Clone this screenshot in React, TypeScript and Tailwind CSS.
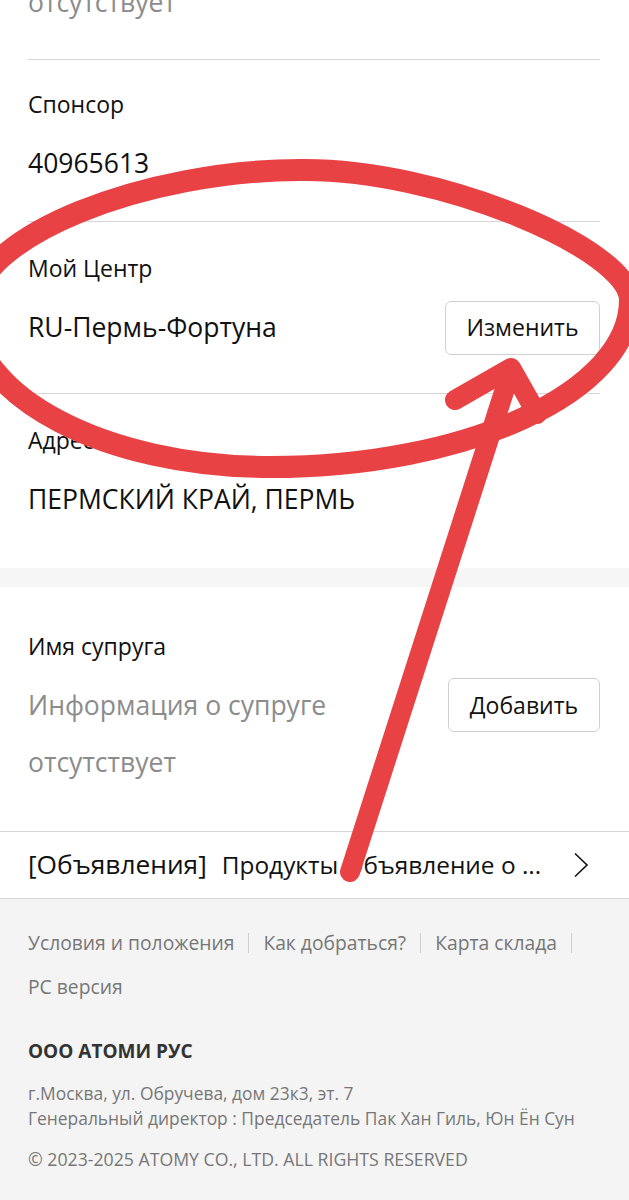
import React from "react";

const LINE = "border-[#d6d6d6]";

function OutlineButton({ label, className = "" }: { label: string; className?: string }) {
  return (
    <button
      className={`flex h-[54px] shrink-0 items-center justify-center rounded-[6px] border-[1.5px] border-[#d0d0d0] bg-white text-[23px] text-[#111] ${className}`}
    >
      {label}
    </button>
  );
}

function Annotation() {
  // red marker drawn over the screenshot
  return (
    <svg
      className="pointer-events-none absolute left-0 top-0"
      width="629"
      height="1200"
      viewBox="0 0 629 1200"
      fill="none"
    >
      <path
        d="M630 300 C630 250 440 168 300 170 C150 170 -28 234 -28 312 C-28 397 106 467 270 467 C467 467 630 392 630 300 Z"
        stroke="#e84244"
        strokeWidth="22"
      />
      <path d="M350 872 L511 370" stroke="#e84244" strokeWidth="20" strokeLinecap="round" />
      <path
        d="M455 400 L511 368 L537 414"
        stroke="#e84244"
        strokeWidth="20"
        strokeLinecap="round"
        strokeLinejoin="round"
      />
    </svg>
  );
}

const footerLinks = ["Условия и положения", "Как добраться?", "Карта склада", "PC версия"];

export default function App() {
  return (
    <div className="relative h-[1200px] w-[629px] overflow-hidden bg-white font-['Open_Sans',sans-serif] text-[#111]">
      {/* PROFILE FIELDS */}
      <div className="pl-[28px] pr-[29px]">
        <div className={`-mt-[26px] border-b ${LINE} pb-[28px] text-[26.5px] leading-[57px] text-[#8c8c8c]`}>
          отсутствует
        </div>

        <div className={`border-b ${LINE} pb-[29px] pt-[28px]`}>
          <div className="text-[23px] leading-[32px]">Спонсор</div>
          <div className="mt-[15px] text-[26.5px] leading-[57px]">40965613</div>
        </div>

        <div className={`border-b ${LINE} pb-[37px] pt-[30px]`}>
          <div className="text-[23px] leading-[32px]">Мой Центр</div>
          <div className="mt-[15px] flex h-[57px] items-center justify-between">
            <span className="text-[26.5px] leading-[57px]">RU-Пермь-Фортуна</span>
            <OutlineButton label="Изменить" className="w-[155px]" />
          </div>
        </div>

        <div className="pb-[40px] pt-[30px]">
          <div className="text-[23px] leading-[32px]">Адрес</div>
          <div className="mt-[15px] text-[26.5px] leading-[57px]">ПЕРМСКИЙ КРАЙ, ПЕРМЬ</div>
        </div>
      </div>

      <div className="h-[19px] bg-[#f6f6f6]" />

      {/* SPOUSE */}
      <div className={`border-b ${LINE} pb-[40px] pl-[28px] pr-[29px] pt-[43px]`}>
        <div className="text-[23px] leading-[32px]">Имя супруга</div>
        <div className="mt-[15px] flex items-start justify-between">
          <div className="w-[335px] text-[26.5px] leading-[57px] text-[#8c8c8c]">
            Информация о супруге отсутствует
          </div>
          <OutlineButton label="Добавить" className="mt-[1px] w-[152px]" />
        </div>
      </div>

      {/* NOTICE ROW */}
      <div className={`flex h-[67px] items-center border-b ${LINE} pl-[28px] pr-[40px]`}>
        <span className="text-[26.3px]">[Объявления]</span>
        <span className="ml-[15px] flex-1 truncate text-[24.4px]">Продукты Объявление о ...</span>
        <svg width="16" height="26" viewBox="0 0 16 26" className="ml-[10px]">
          <polyline points="2,1.5 14,13 2,24.5" fill="none" stroke="#111" strokeWidth="1.6" />
        </svg>
      </div>

      {/* FOOTER */}
      <footer className="bg-[#f4f4f4] pb-[60px] pl-[28px] pr-[29px] pt-[22px] text-[#777]">
        <div className="flex flex-wrap items-center text-[19.3px] leading-[44px]">
          {footerLinks.map((l, i) => (
            <span key={l} className="flex items-center">
              {l}
              {i < footerLinks.length - 1 && <span className="mx-[14px] h-[20px] w-px bg-[#cfcfcf]" />}
            </span>
          ))}
        </div>
        <div className="mt-[28px] text-[19px] font-bold leading-[28px] text-[#333]">ООО АТОМИ РУС</div>
        <div className="mt-[16px] text-[17.4px] leading-[25px]">
          <div>г.Москва, ул. Обручева, дом 23к3, эт. 7</div>
          <div>Генеральный директор : Председатель Пак Хан Гиль, Юн Ён Сун</div>
        </div>
        <div className="mt-[15px] text-[17.7px] leading-[26px]">© 2023-2025 ATOMY CO., LTD. ALL RIGHTS RESERVED</div>
      </footer>

      <Annotation />
    </div>
  );
}
